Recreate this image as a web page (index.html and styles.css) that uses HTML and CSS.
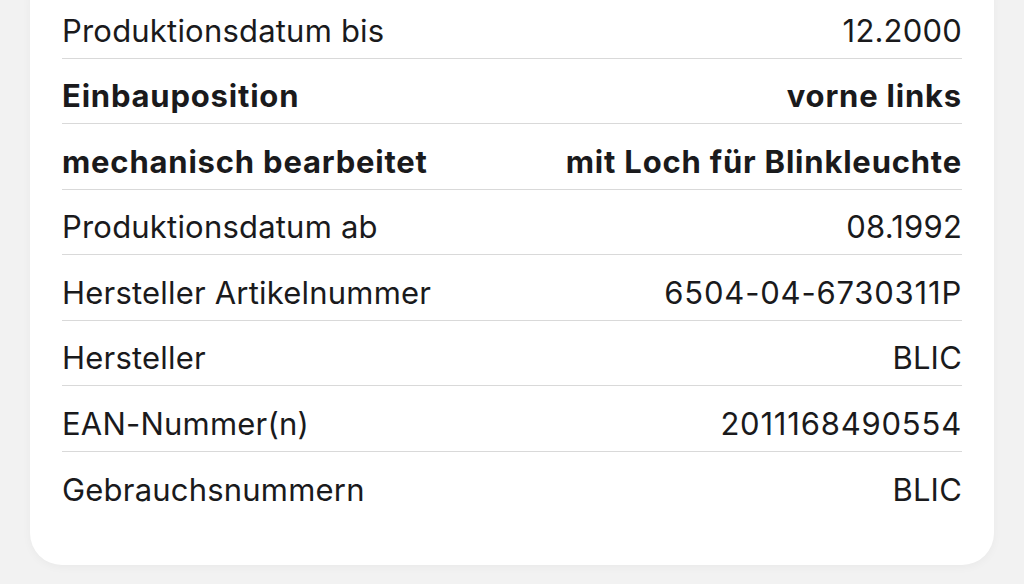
FILE: index.html
```html
<!DOCTYPE html>
<html lang="de">
<head>
<meta charset="utf-8">
<link rel="stylesheet" href="styles.css">
</head>
<body>
<div class="card">
  <div class="row"><span class="k">Produktionsdatum bis</span><span class="v">12.2000</span></div>
  <div class="row bold"><span class="k">Einbauposition</span><span class="v">vorne links</span></div>
  <div class="row bold"><span class="k">mechanisch bearbeitet</span><span class="v">mit Loch für Blinkleuchte</span></div>
  <div class="row"><span class="k">Produktionsdatum ab</span><span class="v">08.1992</span></div>
  <div class="row"><span class="k">Hersteller Artikelnummer</span><span class="v num">6504-04-6730311P</span></div>
  <div class="row"><span class="k">Hersteller</span><span class="v">BLIC</span></div>
  <div class="row"><span class="k">EAN-Nummer(n)</span><span class="v num">2011168490554</span></div>
  <div class="row last"><span class="k">Gebrauchsnummern</span><span class="v">BLIC</span></div>
</div>
</body>
</html>
```
FILE: styles.css
```css
html, body {
  margin: 0;
  padding: 0;
  background: #f2f2f2;
  height: 584px;
  overflow: hidden;
}
body {
  font-family: Inter, "Noto Sans", sans-serif;
  color: #1a1a1c;
}
.card {
  margin: -7px 0 0 30px;
  width: 900px;
  padding: 0 32px 48px 32px;
  background: #fff;
  border-radius: 0 0 32px 32px;
  box-shadow: 0 2px 10px rgba(0,0,0,0.04);
}
.row {
  box-sizing: border-box;
  display: flex;
  justify-content: space-between;
  align-items: center;
  height: 65.5px;
  padding-top: 10px;
  border-bottom: 1px solid #d9d9d9;
  font-size: 31px;
  font-weight: 400;
  letter-spacing: 0.2px;
}
.row.bold {
  font-weight: 700;
  letter-spacing: 0.8px;
}
.v.num {
  letter-spacing: 0.8px;
}
.row.last {
  border-bottom: none;
}
```
